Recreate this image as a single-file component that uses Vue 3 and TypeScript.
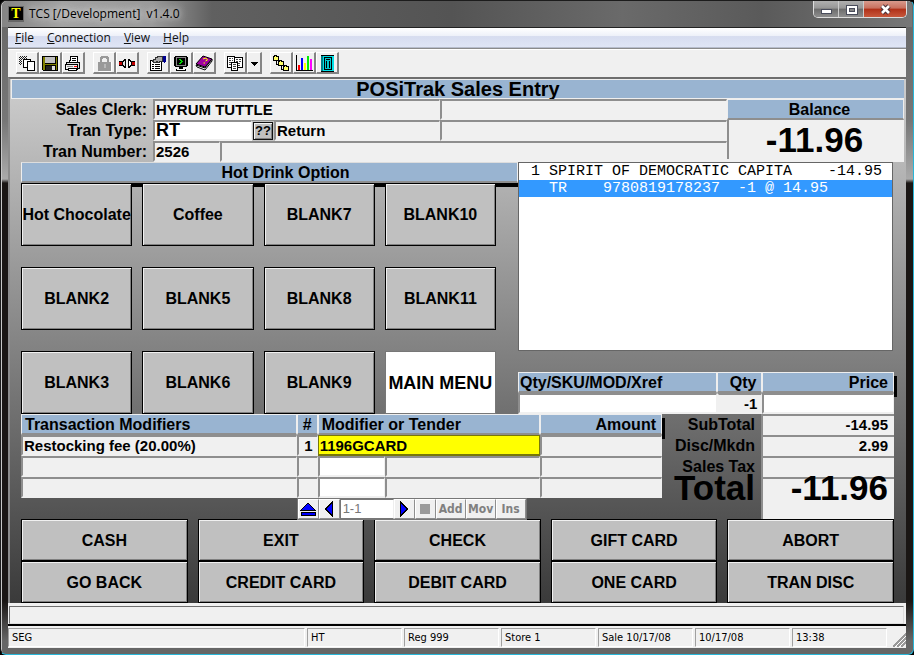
<script setup lang="ts">
import { ref } from 'vue'

interface MenuItem { key: string; rest: string }
interface ModifierRow { name: string; line: string; code: string; active: boolean }
interface TotalRow { label: string; value: string }

const menus: MenuItem[] = [
  { key: 'F', rest: 'ile' },
  { key: 'C', rest: 'onnection' },
  { key: 'V', rest: 'iew' },
  { key: 'H', rest: 'elp' },
]

const toolGroups: string[][] = [
  ['copy', 'save', 'print'],
  ['lock', 'connect'],
  ['properties', 'terminal', 'help'],
  ['pages', 'drop'],
  ['tree', 'chart', 'calculator'],
]

const hotKeys: string[] = [
  'Hot Chocolate', 'Coffee', 'BLANK7', 'BLANK10',
  'BLANK2', 'BLANK5', 'BLANK8', 'BLANK11',
  'BLANK3', 'BLANK6', 'BLANK9', 'MAIN MENU',
]

const receipt: string[] = [
  ' 1 SPIRIT OF DEMOCRATIC CAPITA    -14.95',
  '   TR    9780819178237  -1 @ 14.95',
]

const modifiers = ref<ModifierRow[]>([
  { name: 'Restocking fee (20.00%)', line: '1', code: '1196GCARD', active: true },
  { name: '', line: '', code: '', active: false },
  { name: '', line: '', code: '', active: false },
])

const totals: TotalRow[] = [
  { label: 'SubTotal', value: '-14.95' },
  { label: 'Disc/Mkdn', value: '2.99' },
  { label: 'Sales Tax', value: '' },
]

const actions: string[] = [
  'CASH', 'EXIT', 'CHECK', 'GIFT CARD', 'ABORT',
  'GO BACK', 'CREDIT CARD', 'DEBIT CARD', 'ONE CARD', 'TRAN DISC',
]

const status: string[] = ['SEG', 'HT', 'Reg 999', 'Store 1', 'Sale 10/17/08', '10/17/08', '13:38']

const tranType = ref('RT')
const sku = ref('')
const price = ref('')
const range = ref('1-1')
const selectedLine = ref(1)
</script>

<template>
  <div class="window">
    <header class="titlebar">
      <span class="app-icon" aria-hidden="true"><b>T</b></span>
      <h1 class="caption">TCS [/Development]&nbsp; v1.4.0</h1>
      <div class="window-buttons">
        <button type="button" class="wb" aria-label="Minimize">
          <svg width="13" height="11" viewBox="0 0 13 11"><rect x="1.5" y="5.5" width="10" height="4" fill="#fff" stroke="#4a4d5c" /></svg>
        </button>
        <button type="button" class="wb" aria-label="Maximize">
          <svg width="13" height="11" viewBox="0 0 13 11"><rect x="1" y="1" width="11" height="9" fill="#fff" stroke="#4a4d5c" /><rect x="4" y="4" width="5" height="3" fill="#888" stroke="#4a4d5c" /></svg>
        </button>
        <button type="button" class="wb wb-close" aria-label="Close">
          <svg class="smooth" width="13" height="11" viewBox="0 0 13 11"><path d="M3 2l7 7M10 2l-7 7" stroke="#4a3038" stroke-width="4.6" /><path d="M3 2l7 7M10 2l-7 7" stroke="#fff" stroke-width="2.6" /></svg>
        </button>
      </div>
    </header>

    <div class="client">
      <nav class="menubar">
        <a v-for="m in menus" :key="m.key" href="#"><u>{{ m.key }}</u>{{ m.rest }}</a>
      </nav>

      <div class="toolbar">
        <div v-for="(group, g) in toolGroups" :key="g" class="tool-group">
          <button v-for="t in group" :key="t" type="button" class="tool" :class="{ narrow: t === 'drop' }" :aria-label="t">
            <svg v-if="t === 'copy'" width="18" height="18" viewBox="0 0 18 18">
              <path d="M2 2.500h8M1 3.500h8M2 4.500h8M1 5.500h3M2 6.500h2M1 7.500h3M2 8.500h2M1 9.500h3M2 10.500h2" stroke="#222" stroke-dasharray="1 1" />
              <path d="M5.500 5.500h7v8h-7z" fill="#fff" stroke="#000" /><path d="M9.500 7.500h7v9h-7z" fill="#fff" stroke="#000" />
            </svg>
            <svg v-else-if="t === 'save'" width="18" height="18" viewBox="0 0 18 18">
              <path d="M1 2h16v15H2l-1-1z" fill="#000" /><path d="M2 3h2v13H2zM15 3h1v13h-1zM4 10h11v1H4z" fill="#808000" /><path d="M4 3h10v6H4z" fill="#c0c0c0" /><path d="M5 12h8v4H5z" fill="#222" /><path d="M11 12h3v4h-3z" fill="#ddd" />
            </svg>
            <svg v-else-if="t === 'print'" width="18" height="18" viewBox="0 0 18 18">
              <path d="M5.500 8.500V6.500h1v-4h7v6z" fill="#fff" stroke="#000" /><path d="M8 4.500h4M8 6.500h4" stroke="#000" /><path d="M2.500 8.500h13v6h-13z" fill="#ddd" stroke="#000" /><path d="M1.500 10.500h12v5h-12z" fill="#eee" stroke="#000" /><path d="M3 12.500h6" stroke="#888" /><path d="M10 12h3v1h-3z" fill="#f00" /><path d="M4.500 14.500h8v2h-8z" fill="#fff" stroke="#000" />
            </svg>
            <svg v-else-if="t === 'lock'" width="18" height="18" viewBox="0 0 18 18">
              <path d="M6 8V4h1V3h5v1h1v4" fill="none" stroke="#999" stroke-width="2" /><path d="M3 8h13v9H3z" fill="#999" /><path d="M9 10h2v4H9z" fill="#b8b8b8" /><path d="M16.500 8v9.500H4" fill="none" stroke="#fff" />
            </svg>
            <svg v-else-if="t === 'connect'" width="18" height="18" viewBox="0 0 18 18">
              <path d="M1 8h3v3H1zM14 8h3v3h-3z" fill="#c00000" /><path d="M1 7.500h3M1 11.500h3M14 7.500h3M14 11.500h3" stroke="#000" /><path d="M4.500 7.500h1v-1h1v-1h1v8h-1v-1h-1v-1h-1z" fill="#ddd" stroke="#000" /><path d="M10.500 5.500h1v1h1v1h1v4h-1v1h-1v1h-1z" fill="#fff" stroke="#000" />
            </svg>
            <svg v-else-if="t === 'properties'" width="18" height="18" viewBox="0 0 18 18">
              <path d="M1.500 6.500h11v10h-11z" fill="#fff" stroke="#000" /><path d="M3 10.500h2M6 10.500h5M3 12.500h2M6 12.500h5M3 14.500h2M6 14.500h5" stroke="#000" /><path d="M3.500 6.500h1v-1h2v-2h2v-1h5v5h-3v1h-2v-1h-1v1h-3z" fill="#aaa" stroke="#333" /><path d="M14 2h3v6h-1v1h-1V8h-1z" fill="#000090" />
            </svg>
            <svg v-else-if="t === 'terminal'" width="18" height="18" viewBox="0 0 18 18">
              <path d="M3 2h12v1h1v9h-1v1H3v-1H2V3h1z" fill="#000" /><path d="M4 3h10v9H4z" fill="#888" /><path d="M5 4h8v7H5z" fill="#000" /><path d="M7 5h2v1h1v1h1v1h-1v1H9v1H7V9h1V8h1V7H8V6H7z" fill="#0d0" /><path d="M7 13h4v2H7zM4 15h10v2H4z" fill="#000" /><path d="M5 15.500h8" stroke="#fff" />
            </svg>
            <svg v-else-if="t === 'help'" class="smooth" width="18" height="18" viewBox="0 0 18 18">
              <path d="M1 11l9 3 7-9v2l-7 9-8-3z" fill="#fff" stroke="#000" /><path d="M1 10l7-8 9 3-7 8z" fill="#a000a0" stroke="#000" /><path d="M8 5l3-1 1.500 2-2 1M8.500 9h1.500" fill="none" stroke="#ff0" />
            </svg>
            <svg v-else-if="t === 'pages'" width="18" height="18" viewBox="0 0 18 18">
              <path d="M1.500 2.500h7v11h-7zM8.500 3.500h8v10h-8z" fill="#fff" stroke="#000" /><path d="M3 4.500h4M3 6.500h4M3 8.500h4M3 10.500h2M10 5.500h5M10 7.500h5M12 9.500h3M12 11.500h3" stroke="#444" stroke-dasharray="2 1" /><path d="M5.500 8.500h6v8h-6z" fill="#fff" stroke="#000" /><path d="M7 10.500h3M7 12.500h3M7 14.500h3" stroke="#444" />
            </svg>
            <svg v-else-if="t === 'drop'" width="9" height="18" viewBox="0 0 9 18"><path d="M1 8h7v1H7v1H6v1H5v1H4v-1H3v-1H2V9H1z" fill="#000" /></svg>
            <svg v-else-if="t === 'tree'" width="18" height="18" viewBox="0 0 18 18">
              <path d="M4.500 7v3.500H8M9.500 11v4.500h2" fill="none" stroke="#000" /><path d="M1.500 2.500h1v-1h2v1h2v4h-5zM6.500 7.500h1v-1h2v1h2v4h-5zM11.500 12.500h1v-1h2v1h2v4h-5z" fill="#ffff66" stroke="#000" />
            </svg>
            <svg v-else-if="t === 'chart'" width="18" height="18" viewBox="0 0 18 18">
              <path d="M1.500 1v15.500H18" fill="none" stroke="#000" /><path d="M3 11h2v5H3z" fill="#f00" /><path d="M6 4h2v12H6z" fill="#00f" /><path d="M9 9h2v7H9z" fill="#ff0" /><path d="M12 2h2v14h-2z" fill="#0e0" /><path d="M15 5h2v11h-2z" fill="#f0f" />
            </svg>
            <svg v-else width="18" height="18" viewBox="0 0 18 18">
              <path d="M3 2h13v15H3z" fill="#00e0e8" /><path d="M3 2h2v15H3z" fill="#008088" /><path d="M3 1.500h13M3 17.500h13" stroke="#000" /><path d="M6.500 3.500h7v12h-7z" fill="#00c8d0" stroke="#000" /><path d="M8 5.500h4M8.500 7v7M11.500 7v7" stroke="#000" />
            </svg>
          </button>
        </div>
      </div>

      <main class="workspace">
        <h2 class="heading">POSiTrak Sales Entry</h2>

        <section class="summary">
          <div class="labels">
            <span>Sales Clerk:</span>
            <label for="tran-type">Tran Type:</label>
            <span>Tran Number:</span>
          </div>
          <div class="fields">
            <div class="field-row row-clerk">
              <output class="field">HYRUM TUTTLE</output>
              <output class="field"></output>
            </div>
            <div class="field-row row-type">
              <input id="tran-type" v-model="tranType" class="field entry large" type="text" />
              <span class="lookup-cell"><button type="button" class="lookup">??</button></span>
              <output class="field">Return</output>
              <output class="field"></output>
            </div>
            <div class="field-row row-number">
              <output class="field">2526</output>
              <output class="field"></output>
            </div>
          </div>
          <div class="balance">
            <h3 class="head balance-head">Balance</h3>
            <output class="balance-value">-11.96</output>
          </div>
        </section>

        <section class="upper">
          <div class="hot">
            <h3 class="head hot-head">Hot Drink Option</h3>
            <div class="hot-grid">
              <button v-for="k in hotKeys" :key="k" type="button" class="key" :class="{ main: k === 'MAIN MENU' }">{{ k }}</button>
            </div>
          </div>

          <div class="sale">
            <ul class="receipt">
              <li v-for="(line, i) in receipt" :key="i" :class="{ selected: i === selectedLine }" @click="selectedLine = i">{{ line }}</li>
            </ul>
            <table class="grid entry-grid">
              <colgroup><col class="c-sku" /><col class="c-qty" /><col class="c-price" /></colgroup>
              <thead>
                <tr><th>Qty/SKU/MOD/Xref</th><th class="num">Qty</th><th class="num">Price</th></tr>
              </thead>
              <tbody>
                <tr>
                  <td><input v-model="sku" class="field entry" type="text" aria-label="Qty/SKU/MOD/Xref" /></td>
                  <td><span class="field flat num">-1</span></td>
                  <td><input v-model="price" class="field entry num" type="text" aria-label="Price" /></td>
                </tr>
              </tbody>
            </table>
          </div>
        </section>

        <section class="lower">
          <div class="tender">
            <table class="grid">
              <colgroup><col class="c-name" /><col class="c-line" /><col class="c-code" /><col class="c-text" /><col class="c-amount" /></colgroup>
              <thead>
                <tr><th class="pad-left">Transaction Modifiers</th><th class="center">#</th><th class="pad-left" colspan="2">Modifier or Tender</th><th class="num">Amount</th></tr>
              </thead>
              <tbody>
                <tr v-for="(row, i) in modifiers" :key="i">
                  <td><span class="field">{{ row.name }}</span></td>
                  <td><span class="field num">{{ row.line }}</span></td>
                  <td v-if="row.active" colspan="2"><input v-model="row.code" class="field current" type="text" aria-label="Modifier or Tender" /></td>
                  <template v-else>
                    <td><input v-model="row.code" class="field entry" type="text" aria-label="Modifier or Tender" /></td>
                    <td><span class="field"></span></td>
                  </template>
                  <td><span class="field"></span></td>
                </tr>
              </tbody>
            </table>
            <div class="navigator">
              <button type="button" class="nav-btn" aria-label="Top">
                <svg width="16" height="14" viewBox="0 0 16 14"><path d="M8 1l7 7H1zM1 10.500h14v3H1z" fill="#00f" stroke="#000" /></svg>
              </button>
              <button type="button" class="nav-btn" aria-label="Previous">
                <svg width="10" height="16" viewBox="0 0 10 16"><path d="M8.500 1v14L1.500 8z" fill="#00f" stroke="#000" /></svg>
              </button>
              <input v-model="range" class="range" type="text" aria-label="Line range" />
              <button type="button" class="nav-btn" aria-label="Next">
                <svg width="10" height="16" viewBox="0 0 10 16"><path d="M1.500 1v14l7-7z" fill="#00f" stroke="#000" /></svg>
              </button>
              <button type="button" class="nav-btn" aria-label="Stop"><span class="stop"></span></button>
              <button type="button" class="nav-btn word">Add</button>
              <button type="button" class="nav-btn word">Mov</button>
              <button type="button" class="nav-btn word">Ins</button>
            </div>
          </div>
          <dl class="totals">
            <template v-for="t in totals" :key="t.label">
              <dt>{{ t.label }}</dt>
              <dd>{{ t.value }}</dd>
            </template>
            <dt class="grand">Total</dt>
            <dd class="grand">-11.96</dd>
          </dl>
        </section>

        <section class="actions">
          <button v-for="a in actions" :key="a" type="button" class="key">{{ a }}</button>
        </section>
      </main>

      <div class="message"><div class="message-box"></div></div>

      <footer class="statusbar">
        <span v-for="s in status" :key="s" class="status">{{ s }}</span>
        <svg class="grip" width="14" height="14" viewBox="0 0 14 14"><path d="M1 14L14 1M5 14l9-9M9 14l5-5" stroke="#999" stroke-width="2" /><path d="M3 14L14 3M7 14l7-7" stroke="#fff" /></svg>
      </footer>
    </div>
  </div>
</template>

<style>
body {
  margin: 0;
  background: #000;
}
</style>

<style scoped>
* {
  box-sizing: border-box;
}
h1, h2, h3, ul, dl, dd {
  margin: 0;
  padding: 0;
}
button, input {
  margin: 0;
  padding: 0;
  border-radius: 0;
  font: inherit;
  color: inherit;
}
input {
  min-width: 0;
  outline: none;
}
svg {
  display: block;
  flex: none;
  shape-rendering: crispEdges;
}
svg.smooth {
  shape-rendering: auto;
}
.window {
  display: flex;
  flex-direction: column;
  min-height: 100vh;
  padding: 0 7px 6px 7px;
  border: 1px solid #1c1c1c;
  border-right: 1px solid #29b6d8;
  border-bottom-color: #29b6d8;
  border-radius: 6px;
  background: linear-gradient(#666 0, #777 120px, #aaa 178px, #1a1614 182px, #1a1614 600px, #666 640px);
  box-shadow: inset 1px 1px 0 #c8c8c8;
  font-family: "Liberation Sans", Arial, sans-serif;
  font-size: 16px;
  font-weight: bold;
  line-height: 20px;
  color: #000;
}
.titlebar {
  display: flex;
  align-items: center;
  height: 26px;
  margin: 0 -6px;
  padding: 0 5px 0 6px;
  border-radius: 5px 5px 0 0;
  background: linear-gradient(90deg, #848484 0, #a2a2a2 60px, #9a9a9a 150px, #606060 210px, #545454 450px, #6a6a6a 620px, #5a5a5a 760px, #777 100%);
}
.app-icon {
  display: flex;
  align-items: center;
  justify-content: center;
  width: 16px;
  height: 16px;
  border: solid #666;
  border-width: 1px 1px 2px;
  background: #000;
  font-family: "Liberation Serif", serif;
  font-size: 14px;
  line-height: 12px;
  color: #ff0;
}
.caption {
  flex: 1;
  padding-left: 5px;
  font-family: "Open Sans", "Noto Sans", sans-serif;
  font-size: 12px;
  font-weight: normal;
  text-shadow: 0 0 6px #ddd, 0 0 8px #ddd;
}
.window-buttons {
  display: flex;
  align-self: flex-start;
  height: 17px;
  border: 1px solid #ddd;
  border-top: 0;
  border-radius: 0 0 5px 5px;
  overflow: hidden;
}
.wb {
  display: flex;
  align-items: center;
  justify-content: center;
  width: 25px;
  border: 0;
  border-right: 1px solid #ccc;
  background: linear-gradient(#b0b0b0 0, #969696 45%, #6c6c6c 50%, #8e8e8e 100%);
}
.wb-close {
  width: 42px;
  border-right: 0;
  background: linear-gradient(#d89a8c 0, #c8705e 45%, #b03018 50%, #c8583c 100%);
}
.client {
  display: flex;
  flex: 1;
  flex-direction: column;
  border-top: 1px solid #222;
  background: #f0f0f0;
}
.menubar {
  display: flex;
  gap: 13px;
  height: 20px;
  padding: 0 7px;
  border-bottom: 1px solid #b6bccc;
  background: linear-gradient(#fff 0, #eef1f9 40%, #d6dcef 45%, #dfe5f5 100%);
  font-family: "Open Sans", "Noto Sans", sans-serif;
  font-size: 12px;
  font-weight: normal;
  line-height: 19px;
}
.menubar a {
  color: #111;
  text-decoration: none;
}
.toolbar {
  display: flex;
  gap: 8px;
  height: 29px;
  padding: 3px 8px;
  border-top: 1px solid #8a8a8a;
  box-shadow: inset 0 1px 0 #fff;
}
.tool-group {
  display: flex;
}
.tool {
  display: flex;
  align-items: center;
  justify-content: center;
  width: 23px;
  height: 22px;
  border: solid;
  border-width: 1px 2px 2px 1px;
  border-color: #fff #848484 #848484 #fff;
  background: #f0f0f0;
}
.narrow {
  width: 15px;
}
.workspace {
  flex: 1;
  padding: 0 2px 0 1px;
  border: solid #6e6e6e;
  border-width: 2px 0 0 2px;
  border-left-color: #8c8c8c;
  background: linear-gradient(#ccc 0, #c9c9c9 20px, #3a3a3a 100%);
}
.heading {
  height: 20px;
  border: solid #eee;
  border-width: 1px 0 1px 1px;
  background: #99b4d1;
  font-size: 20px;
  line-height: 18px;
  text-align: center;
}
.summary {
  display: grid;
  grid-template-columns: 142px 574fr 177fr;
  height: 63px;
}
.labels {
  display: grid;
  grid-auto-rows: 21px;
  padding-right: 6px;
  line-height: 21px;
  text-align: right;
}
.fields {
  display: grid;
  grid-auto-rows: 21px;
  background: #f0f0f0;
}
.field-row {
  display: grid;
}
.row-clerk {
  grid-template-columns: 1fr 1fr;
}
.row-type {
  grid-template-columns: 99fr 22fr 166fr 287fr;
}
.row-number {
  grid-template-columns: 67fr 507fr;
}
.field {
  display: block;
  width: 100%;
  height: 21px;
  padding: 0 0 0 1px;
  border: solid #f0f0f0;
  border-width: 2px 1px 2px 2px;
  border-top-color: #8e8e8e;
  border-left-color: #8e8e8e;
  background: #f0f0f0;
  font-size: 15px;
  line-height: 17px;
  white-space: nowrap;
}
.field.entry {
  background: #fff;
}
.field.large {
  font-size: 18px;
}
.field.flat {
  border-left-color: #f0f0f0;
}
.field.current {
  border: 1px solid #77770a;
  border-bottom-width: 2px;
  background: #ff0;
}
.lookup-cell {
  padding: 1px;
  border-top: 1px solid #8e8e8e;
  background: #c4c4c4;
}
.lookup {
  display: block;
  width: 100%;
  height: 18px;
  border: 1px solid #111;
  background: #c0c0c0;
  box-shadow: inset 1px 1px 0 #f4f4f4, inset -1px -1px 0 #808080;
  font-size: 13px;
  line-height: 14px;
}
.head, .grid th {
  height: 21px;
  padding-top: 2px;
  border: solid #eee;
  border-width: 1px 1px 2px 1px;
  border-bottom-color: #8e8e8e;
  background: #99b4d1;
  font-size: 16px;
  font-weight: bold;
  line-height: 16px;
}
.balance {
  background: #f0f0f0;
}
.balance-head {
  padding-left: 8px;
  text-align: center;
}
.balance-value {
  display: block;
  height: 39px;
  padding-right: 4px;
  border-left: 2px solid #8e8e8e;
  font-size: 35px;
  line-height: 39px;
  text-align: center;
}
.upper {
  display: grid;
  grid-template-columns: 497fr 376fr;
  padding: 0 10px;
}
.hot-head {
  padding-left: 32px;
  border-top-color: #ddd;
  box-shadow: 4px 4px 0 #000;
  text-align: center;
}
.hot-grid {
  position: relative;
  display: grid;
  grid-template-columns: repeat(4, 1fr);
  grid-auto-rows: 63px;
  gap: 21px 10px;
  padding-right: 22px;
}
.key {
  min-width: 0;
  border: 1px solid #000;
  background: #c0c0c0;
  box-shadow: inset 1px 1px 0 #f0f0f0, inset -1px -1px 0 #808080;
  white-space: nowrap;
}
.key.main {
  border-color: #777;
  background: #fff;
  box-shadow: none;
  font-size: 18px;
}
.sale {
  position: relative;
  display: flex;
  flex-direction: column;
  gap: 21px;
}
.receipt {
  flex: 1;
  margin-right: 1px;
  border: 1px solid #666;
  background: #fff;
  font-family: "Liberation Mono", "Courier New", monospace;
  font-size: 15px;
  font-weight: normal;
  line-height: 17px;
  list-style: none;
  overflow: hidden;
  white-space: pre;
}
.receipt li {
  padding-left: 3px;
}
.receipt .selected {
  background: #3399ff;
  color: #fff;
}
.grid {
  width: 100%;
  border-collapse: separate;
  border-spacing: 0;
  table-layout: fixed;
}
.grid thead tr {
  box-shadow: 3px 4px 0 #000;
}
.grid th, .grid td {
  text-align: left;
}
.grid th {
  padding: 2px 1px 0;
  white-space: nowrap;
}
.grid td {
  position: relative;
  height: 21px;
  padding: 0;
}
.grid th.num {
  padding-right: 5px;
  text-align: right;
}
.grid th.center {
  text-align: center;
}
.grid th.pad-left {
  padding-left: 3px;
}
.num {
  text-align: right;
}
.field.num {
  padding-right: 4px;
}
.c-sku { width: 53%; }
.c-qty { width: 12%; }
.c-price { width: 35%; }
.c-name { width: 43%; }
.c-line { width: 21px; }
.c-code { width: 67px; }
.c-amount { width: 19%; }
.lower {
  display: grid;
  grid-template-columns: 641fr 232fr;
  height: 105px;
  padding: 0 10px;
}
.tender {
  display: flex;
  flex-direction: column;
}
.navigator {
  position: relative;
  display: flex;
  align-self: flex-start;
  height: 22px;
  margin-left: 43%;
  border: 1px solid #777;
  background: #f0f0f0;
}
.nav-btn {
  display: flex;
  align-items: center;
  justify-content: center;
  width: 21px;
  border: 1px solid;
  border-color: #fff #8e8e8e #8e8e8e #fff;
  background: #f0f0f0;
}
.word {
  width: 30px;
  font-family: "DejaVu Sans Condensed", "DejaVu Sans", sans-serif;
  font-size: 12px;
  color: #808080;
}
.stop {
  width: 10px;
  height: 10px;
  background: #9a9a9a;
}
.range {
  width: 54px;
  padding-left: 2px;
  border: 1px solid #777;
  border-right-color: #eee;
  background: #fff;
  font-size: 13px;
  font-weight: normal;
  color: #777;
}
.totals {
  display: grid;
  grid-template-columns: 99fr 133fr;
  grid-template-rows: 21px 21px 21px 42px;
}
.totals dt {
  padding-right: 6px;
  line-height: 21px;
  text-align: right;
}
.totals dd {
  padding-right: 6px;
  border: solid #8e8e8e;
  border-width: 2px 0 0 2px;
  background: #f0f0f0;
  font-size: 15px;
  line-height: 18px;
  text-align: right;
}
.totals .grand {
  font-size: 35px;
  line-height: 21px;
}
.totals dd.grand {
  line-height: 17px;
}
.actions {
  display: grid;
  grid-template-columns: repeat(5, 1fr);
  grid-auto-rows: 42px;
  column-gap: 10px;
  padding: 0 10px;
}
.actions .key {
  padding-top: 2px;
}
.message {
  padding: 3px 2px 0 1px;
  border-bottom: 2px solid #000;
  background: #f0f0f0;
}
.message-box {
  height: 18px;
  border: 1px solid #6e6e6e;
  border-right-color: #ddd;
  border-bottom-color: #ddd;
  background: #f0f0f0;
}
.statusbar {
  display: flex;
  gap: 2px;
  height: 22px;
  padding: 2px 0 1px;
  font-family: "DejaVu Sans Condensed", "DejaVu Sans", sans-serif;
  font-size: 11px;
  font-weight: normal;
  line-height: 18px;
}
.status {
  width: 95px;
  padding-left: 3px;
  border: solid;
  border-width: 1px;
  border-color: #a0a0a0 #fff #fff #a0a0a0;
}
.status:first-child {
  flex: 1;
}
.grip {
  align-self: flex-end;
  margin-left: 3px;
}
</style>
